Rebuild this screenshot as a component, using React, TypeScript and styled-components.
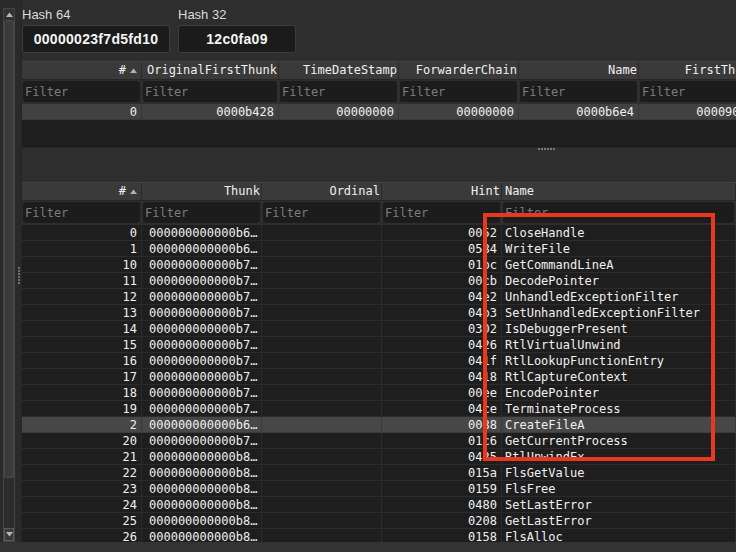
import React from "react";
import styled, { createGlobalStyle } from "styled-components";

const MONO = `"DejaVu Sans Mono", "Liberation Mono", monospace`;

const GlobalStyle = createGlobalStyle`
  html, body { margin: 0; padding: 0; background: #2e2e2e; }
  body { width: 736px; height: 552px; overflow: hidden; font-family: "Liberation Sans", Arial, sans-serif; }
  *, *::before, *::after { box-sizing: border-box; }
`;

const Screen = styled.div`
  position: relative;
  width: 736px;
  height: 552px;
  display: flex;
  flex-direction: column;
  background: #2e2e2e;
  overflow: hidden;
`;

const Workspace = styled.div`
  display: flex;
  height: 542px;
  flex: none;
`;

const StatusBar = styled.div`
  height: 10px;
  flex: none;
  background: #333333;
`;

const Rail = styled.div`
  width: 22px;
  flex: none;
  display: flex;
  padding-left: 3px;
  background: #2a2a2a;
  border-right: 1px solid #262626;
`;

const Scrollbar = styled.div`
  width: 13px;
  margin-top: 8px;
  display: flex;
  flex-direction: column;
  background: #2c2c2c;
  border: 1px solid #454545;
`;

const ArrowBtn = styled.div<{ $boxed?: boolean }>`
  height: ${(p) => (p.$boxed ? "13px" : "10px")};
  flex: none;
  display: flex;
  align-items: center;
  justify-content: center;
  background: ${(p) => (p.$boxed ? "#3a3a3a" : "#323232")};
  border: ${(p) => (p.$boxed ? "1px solid #5a5a5a" : "none")};
`;

const Track = styled.div`
  flex: 1;
  display: flex;
  flex-direction: column;
  padding-top: 1px;
`;

const Thumb = styled.div`
  height: 458px;
  background: #3b3b3b;
  border: 1px solid #4a4a4a;
  border-radius: 2px;
`;

const GripCol = styled.div`
  width: 6px;
  padding: 267px 0 0 3px;
  display: flex;
  flex-direction: column;
  gap: 1px;
`;

const Dot = styled.span`
  display: block;
  width: 2px;
  height: 2px;
  background: #6e6e6e;
`;

const Main = styled.div`
  flex: 1;
  min-width: 0;
  display: flex;
  flex-direction: column;
  overflow: hidden;
`;

const HashBar = styled.div`
  height: 61px;
  flex: none;
  display: flex;
  gap: 8px;
  padding-top: 7px;
`;

const HashField = styled.div`
  display: flex;
  flex-direction: column;
  gap: 2px;
`;

const HashLabel = styled.div`
  font-size: 13px;
  line-height: 16px;
  color: #dadada;
`;

const HashBox = styled.div<{ $w: number }>`
  width: ${(p) => p.$w}px;
  height: 28px;
  display: flex;
  align-items: center;
  justify-content: center;
  background: #1b1b1b;
  border: 1px solid #3c3c3c;
  border-radius: 3px;
  font-weight: bold;
  font-size: 14px;
  letter-spacing: 0.3px;
  color: #f4f4f4;
`;

const Table = styled.div<{ $grow?: boolean }>`
  display: flex;
  flex-direction: column;
  flex: ${(p) => (p.$grow ? "1" : "none")};
  min-height: 0;
  overflow: hidden;
`;

const Grid = styled.div<{ $cols: string }>`
  display: grid;
  grid-template-columns: ${(p) => p.$cols};
`;

const HeaderRow = styled(Grid)`
  height: 19px;
  background: #3a3a3a;
  border-top: 1px solid #424242;
  border-bottom: 1px solid #262626;
`;

const HeadCell = styled.div<{ $align?: "left" | "right" }>`
  font-family: ${MONO};
  font-size: 12px;
  line-height: 17px;
  color: #efefef;
  padding: ${(p) => (p.$align === "left" ? "0 4px 0 3px" : "0 1px 0 2px")};
  border-right: 1px solid #2a2a2a;
  white-space: nowrap;
  overflow: hidden;
  display: flex;
  align-items: center;
  justify-content: ${(p) => (p.$align === "left" ? "flex-start" : "flex-end")};
`;

const SortArrow = styled.svg`
  margin: 0 3px 0 4px;
  flex: none;
`;

const FilterRow = styled(Grid)`
  padding: 1px 0 2px;
  background: #2e2e2e;
`;

const FilterCell = styled.div`
  padding: 0 2px 0 1px;
`;

const FilterInput = styled.input`
  display: block;
  width: 100%;
  height: 21px;
  border: none;
  outline: none;
  border-radius: 3px;
  background: #1c1c1c;
  color: #dddddd;
  font-family: ${MONO};
  font-size: 12px;
  padding: 1px 2px 0;
  &::placeholder { color: #7b7b7b; }
`;

const Body = styled.div<{ $h?: number }>`
  background: #1e1e1e;
  flex: ${(p) => (p.$h ? "none" : "1")};
  height: ${(p) => (p.$h ? `${p.$h}px` : "auto")};
  overflow: hidden;
`;

const DataRow = styled(Grid)<{ $sel?: boolean; $top?: boolean }>`
  height: 16px;
  background: ${(p) => (p.$top ? "#414141" : p.$sel ? "#474747" : "#1e1e1e")};
  border-bottom: 1px solid ${(p) => (p.$top ? "#383838" : p.$sel ? "#3c3c3c" : "#2b2b2b")};
`;

const Cell = styled.div<{ $align?: "left" | "right"; $trunc?: boolean; $line?: string }>`
  font-family: ${MONO};
  font-size: 12px;
  line-height: 16px;
  color: #f0f0f0;
  white-space: nowrap;
  overflow: hidden;
  text-overflow: ${(p) => (p.$trunc ? "ellipsis" : "clip")};
  text-align: ${(p) => (p.$align === "left" ? "left" : "right")};
  padding: ${(p) => (p.$trunc ? "0 3px 0 7px" : p.$align === "left" ? "0 4px 0 3px" : "0 4px 0 2px")};
  border-right: 1px solid ${(p) => p.$line || "#2b2b2b"};
`;

const Splitter = styled.div`
  height: 35px;
  flex: none;
  background: #2f2f2f;
  border-top: 1px solid #262626;
  display: flex;
  gap: 1px;
  padding-left: 516px;
`;

const HDot = styled.span`
  display: block;
  width: 2px;
  height: 2px;
  background: #7a7a7a;
`;

const Annotation = styled.div`
  position: absolute;
  left: 483px;
  top: 213px;
  width: 232px;
  height: 248px;
  border: 4px solid #e8391f;
  pointer-events: none;
`;

const TOP_COLS = "120px 137px 120px 120px 120px 120px";
const BOT_COLS = "120px 120px 120px 120px 1fr";

const topHeaders = ["OriginalFirstThunk", "TimeDateStamp", "ForwarderChain", "Name", "FirstThunk"];
const topValues = ["0", "0000b428", "00000000", "00000000", "0000b6e4", "00009000"];

type Imp = [string, string, string, string];
const imports: Imp[] = [
  ["0", "000000000000b6f2", "0052", "CloseHandle"],
  ["1", "000000000000b6e0", "0584", "WriteFile"],
  ["10", "000000000000b76e", "01bc", "GetCommandLineA"],
  ["11", "000000000000b780", "00cb", "DecodePointer"],
  ["12", "000000000000b790", "04e2", "UnhandledExceptionFilter"],
  ["13", "000000000000b7ac", "04b3", "SetUnhandledExceptionFilter"],
  ["14", "000000000000b7ca", "0302", "IsDebuggerPresent"],
  ["15", "000000000000b7de", "0426", "RtlVirtualUnwind"],
  ["16", "000000000000b7f2", "041f", "RtlLookupFunctionEntry"],
  ["17", "000000000000b70c", "0418", "RtlCaptureContext"],
  ["18", "000000000000b720", "00ee", "EncodePointer"],
  ["19", "000000000000b730", "04ce", "TerminateProcess"],
  ["2", "000000000000b6fe", "0088", "CreateFileA"],
  ["20", "000000000000b744", "01c6", "GetCurrentProcess"],
  ["21", "000000000000b858", "0425", "RtlUnwindEx"],
  ["22", "000000000000b866", "015a", "FlsGetValue"],
  ["23", "000000000000b874", "0159", "FlsFree"],
  ["24", "000000000000b87e", "0480", "SetLastError"],
  ["25", "000000000000b88e", "0208", "GetLastError"],
  ["26", "000000000000b89e", "0158", "FlsAlloc"],
];

const Arrow = ({ down }: { down?: boolean }) => (
  <svg width="7" height="5" viewBox="0 0 7 5">
    <path d={down ? "M0 0 L7 0 L3.5 4.5 Z" : "M0 5 L7 5 L3.5 0.5 Z"} fill="#b8b8b8" />
  </svg>
);

const SortMark = () => (
  <SortArrow width="7" height="5" viewBox="0 0 7 5">
    <path d="M0 5 L7 5 L3.5 0.5 Z" fill="#b0b0b0" />
  </SortArrow>
);

export default function App() {
  return (
    <Screen>
      <GlobalStyle />
      <Workspace>
        <Rail>
          <Scrollbar>
            <ArrowBtn>
              <Arrow />
            </ArrowBtn>
            <Track>
              <Thumb />
            </Track>
            <ArrowBtn $boxed>
              <Arrow down />
            </ArrowBtn>
          </Scrollbar>
          <GripCol>
            {Array.from({ length: 6 }).map((_, i) => (
              <Dot key={i} />
            ))}
          </GripCol>
        </Rail>
        <Main>
          <HashBar>
            <HashField>
              <HashLabel>Hash 64</HashLabel>
              <HashBox $w={148}>00000023f7d5fd10</HashBox>
            </HashField>
            <HashField>
              <HashLabel>Hash 32</HashLabel>
              <HashBox $w={118}>12c0fa09</HashBox>
            </HashField>
          </HashBar>

          <Table>
            <HeaderRow $cols={TOP_COLS}>
              <HeadCell>
                #<SortMark />
              </HeadCell>
              {topHeaders.map((h) => (
                <HeadCell key={h}>{h}</HeadCell>
              ))}
            </HeaderRow>
            <FilterRow $cols={TOP_COLS}>
              {Array.from({ length: 6 }).map((_, i) => (
                <FilterCell key={i}>
                  <FilterInput placeholder="Filter" />
                </FilterCell>
              ))}
            </FilterRow>
            <Body $h={43}>
              <DataRow $cols={TOP_COLS} $top>
                {topValues.map((v, i) => (
                  <Cell key={i} $line="#363636">
                    {v}
                  </Cell>
                ))}
              </DataRow>
            </Body>
          </Table>

          <Splitter>
            {Array.from({ length: 6 }).map((_, i) => (
              <HDot key={i} />
            ))}
          </Splitter>

          <Table $grow>
            <HeaderRow $cols={BOT_COLS}>
              <HeadCell>
                #<SortMark />
              </HeadCell>
              <HeadCell>Thunk</HeadCell>
              <HeadCell>Ordinal</HeadCell>
              <HeadCell>Hint</HeadCell>
              <HeadCell $align="left">Name</HeadCell>
            </HeaderRow>
            <FilterRow $cols={BOT_COLS}>
              {Array.from({ length: 5 }).map((_, i) => (
                <FilterCell key={i}>
                  <FilterInput placeholder="Filter" />
                </FilterCell>
              ))}
            </FilterRow>
            <Body>
              {imports.map(([idx, thunk, hint, name]) => {
                const sel = idx === "2";
                const line = sel ? "#3a3a3a" : "#2b2b2b";
                return (
                  <DataRow key={idx} $cols={BOT_COLS} $sel={sel}>
                    <Cell $line={line}>{idx}</Cell>
                    <Cell $line={line} $trunc $align="left">
                      {thunk}
                    </Cell>
                    <Cell $line={line}></Cell>
                    <Cell $line={line}>{hint}</Cell>
                    <Cell $line={line} $align="left">
                      {name}
                    </Cell>
                  </DataRow>
                );
              })}
            </Body>
          </Table>
        </Main>
      </Workspace>
      <StatusBar />
      <Annotation />
    </Screen>
  );
}
